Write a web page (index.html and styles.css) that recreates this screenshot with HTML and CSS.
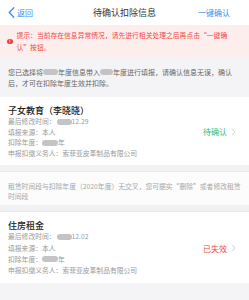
FILE: index.html
```html
<!DOCTYPE html>
<html lang="zh-CN">
<head>
<meta charset="utf-8">
<link rel="stylesheet" href="styles.css">
</head>
<body>
<div class="page">
  <header class="nav">
    <div class="nav-back">
      <svg class="nav-back-icon" width="7" height="11" viewBox="0 0 7 11"><path d="M5.8 0.8 L1.3 5.5 L5.8 10.2" fill="none" stroke="#3d8ef0" stroke-width="1.3" stroke-linecap="round" stroke-linejoin="round"/></svg>
      <span>返回</span>
    </div>
    <div class="nav-title">待确认扣除信息</div>
    <div class="nav-action">一键确认</div>
  </header>

  <div class="alert">
    <span class="alert-icon">!</span>
    <p class="alert-text">提示：当前存在信息异常情况，请先进行相关处理之后再点击“一键确<br>认”按钮。</p>
  </div>

  <p class="info">您已选择将<span class="blur blur-a"></span>年度信息带入<span class="blur blur-b"></span>年度进行填报，请确认信息无误，确认<br>后，才可在扣除年度生效并扣除。</p>

  <section class="card">
    <div class="card-body">
      <h2 class="card-title">子女教育（李晓晓）</h2>
      <div class="row">最后修改时间：<span class="blur blur-date"></span>12.29</div>
      <div class="row">填报来源：本人</div>
      <div class="row">扣除年度：<span class="blur blur-year"></span>年</div>
      <div class="row">申报扣缴义务人：索菲亚皮革制品有限公司</div>
    </div>
    <div class="status status-pending">待确认<svg class="chev" width="5" height="8" viewBox="0 0 5 8"><path d="M1 0.8 L4 4 L1 7.2" fill="none" stroke="#c8c8c8" stroke-width="0.8"/></svg></div>
  </section>

  <div class="gap"></div>

  <p class="note">租赁时间段与扣除年度（2020年度）无交叉，您可据实“删除”或者修改租赁<br>时间段</p>

  <div class="gap"></div>

  <section class="card card-tall">
    <div class="card-body">
      <h2 class="card-title">住房租金</h2>
      <div class="row">最后修改时间：<span class="blur blur-date"></span>12.02</div>
      <div class="row">填报来源：本人</div>
      <div class="row">扣除年度：<span class="blur blur-year"></span>年</div>
      <div class="row">申报扣缴义务人：索菲亚皮革制品有限公司</div>
    </div>
    <div class="status status-expired">已失效<svg class="chev" width="5" height="8" viewBox="0 0 5 8"><path d="M1 0.8 L4 4 L1 7.2" fill="none" stroke="#c8c8c8" stroke-width="0.8"/></svg></div>
  </section>
</div>
</body>
</html>
```

FILE: styles.css
```css
* { box-sizing: border-box; }
html, body { margin: 0; padding: 0; }
body {
  background: #f4f4f6;
  font-family: "Noto Sans CJK SC", "Liberation Sans", sans-serif;
  color: #333;
}
.page { width: 249px; }

.nav {
  height: 25px;
  background: #fff;
  display: grid;
  grid-template-columns: 1fr auto 1fr;
  align-items: center;
}
.nav-back {
  display: flex;
  align-items: center;
  gap: 2px;
  padding-left: 8px;
  font-size: 8px;
  color: #3d8ef0;
}
.nav-title {
  font-size: 9px;
  color: #333;
}
.nav-action {
  justify-self: end;
  padding-right: 19px;
  font-size: 8px;
  color: #3d8ef0;
}

.alert {
  height: 32px;
  background: #fdeeee;
  display: flex;
  align-items: center;
  padding-left: 7px;
  gap: 4px;
}
.alert-icon {
  width: 5.5px;
  height: 5.5px;
  border-radius: 50%;
  background: #ee3a3a;
  color: #fff;
  font-size: 4.5px;
  line-height: 5.5px;
  font-weight: 700;
  text-align: center;
  flex: none;
  margin-top: 1px;
}
.alert-text {
  margin: 0;
  font-size: 6.8px;
  line-height: 12px;
  color: #f04a46;
  white-space: nowrap;
}

.info {
  margin: 0;
  height: 40px;
  padding: 9.5px 0 0 8px;
  font-size: 7px;
  line-height: 11px;
  color: #666;
  white-space: nowrap;
}

.blur {
  display: inline-block;
  height: 6px;
  border-radius: 3px;
  background: #c4c4c6;
  vertical-align: -0.5px;
}
.blur-a { width: 15px; }
.blur-b { width: 13px; }
.blur-date { width: 15px; margin-left: 1px; }
.blur-year { width: 16px; }

.card {
  background: #fff;
  display: flex;
  align-items: center;
  padding: 8px 13px 7px 8px;
}
.card-body { flex: 1; }
.card-title {
  margin: 0;
  font-size: 9px;
  line-height: 11px;
  font-weight: 500;
  color: #222;
}
.row {
  font-size: 6.8px;
  line-height: 10.6px;
  color: #9a9a9a;
  white-space: nowrap;
}
.card-tall .row { line-height: 11.2px; }

.status {
  display: flex;
  align-items: center;
  gap: 4px;
  font-size: 8px;
}
.status-pending { color: #2fbf72; }
.status-expired { color: #f04a46; }

.gap {
  height: 7px;
  background: #f2f2f4;
  border-bottom: 1px solid #e9e9eb;
}

.note {
  margin: 0;
  height: 33px;
  padding: 10px 0 0 8px;
  background: #fcfcfc;
  font-size: 6.8px;
  line-height: 9.5px;
  color: #a8a8a8;
  white-space: nowrap;
}
```
